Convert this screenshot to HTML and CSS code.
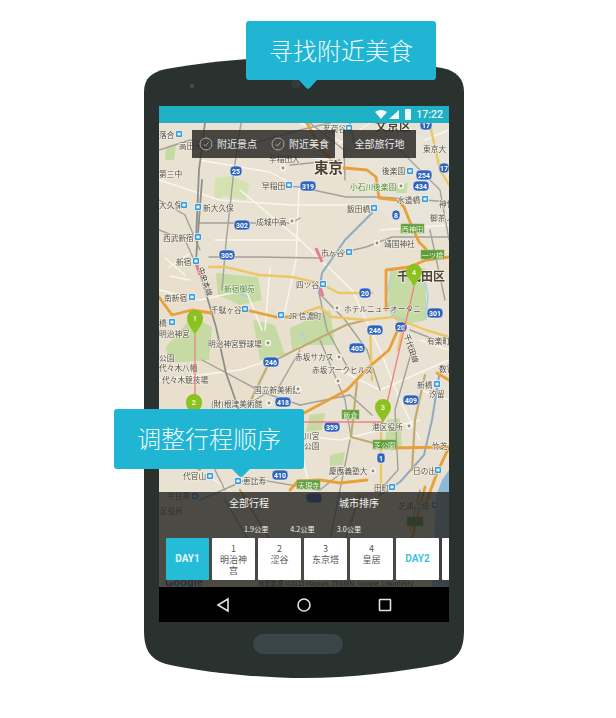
FILE: index.html
```html
<!DOCTYPE html>
<html lang="zh-CN">
<head>
<meta charset="utf-8">
<title>寻找附近美食</title>
<link rel="stylesheet" href="styles.css">
</head>
<body>
<div class="stage">
  <div class="phone">
    <svg class="shell" viewBox="144 57 320 621" aria-hidden="true">
      <path class="shell-body" d="M144 92C144 78 152 72 166 69C210 61 260 57 304 57C350 57 400 60 442 68C456 71 464 78 464 92L464 630C464 650 458 659 442 664C400 672 350 678 304 678C260 678 200 672 166 664C150 659 144 650 144 630Z"/>
      <circle class="shell-cam" cx="192" cy="86" r="2"/>
      <circle class="shell-speaker" cx="296" cy="84" r="5"/>
    </svg>
    <div class="screen">
      <div class="statusbar">
        <svg class="st-icons" viewBox="0 0 36 12" aria-hidden="true">
          <path d="M0 3Q6-1 12 3L6 10Z"/>
          <path d="M14 10L24 1V10Z"/>
          <rect x="30" y="0" width="6" height="11" rx=".8"/>
        </svg>
        <span class="clock">17:22</span>
      </div>
      <div class="maparea">
        <svg class="map" viewBox="159 123 290 464" aria-hidden="true">
          <defs>
            <g id="st"><rect x="-3.5" y="-3.5" width="7" height="7" rx="1.5" class="st-b"/><rect x="-1.6" y="-1.4" width="3.2" height="2.8" class="st-w"/></g>
            <g id="poi"><circle r="3.2" class="poi-o"/><circle r="1.4" class="poi-i"/></g>
          </defs>
          <rect class="land" x="159" y="123" width="290" height="464"/>
          <path class="land2" d="M159 250L200 270L260 300L300 330L250 400L159 420Z"/>
          <path class="land3" d="M350 130L449 130V240L400 230L360 190Z"/>
          <!-- parks -->
          <path class="park" d="M216 273L258 277L262 300L240 305L218 295Z"/>
          <path class="park" d="M192 317L212 327L209 360L169 363L166 347Z"/>
          <path class="park" d="M390 270L425 268L427 320L400 325L388 310Z"/>
          <path class="park" d="M253 320L275 325L285 355L260 360Z"/>
          <path class="park" d="M290 328L330 310L335 345L300 345L292 352Z"/>
          <path class="park" d="M387 420L400 418L402 447L385 447Z"/>
          <path class="park" d="M310 415L325 413L322 430L306 432Z"/>
          <path class="park-l" d="M215 178L232 176L249 184L246 200L225 196L214 200Z"/>
          <path class="park" d="M166 147L176 145L174 160L165 160Z"/>
          <path class="park" d="M395 185L408 183L406 193L396 193Z"/>
          <path class="park" d="M330 455L345 452L343 465L330 466Z"/>
          <path class="water" d="M449 470L442 480L436 496L432 587H449Z"/>
          <path class="moat" d="M391 275L386 300L392 315L405 320M423 272L428 295L426 318"/>
          <path class="moat" d="M306 340L300 332M232 290L248 297"/>
          <!-- white roads -->
          <g class="rw">
            <path d="M199 160L270 172L299 188L296 260L283 320"/>
            <path d="M159 180L220 200L292 205L372 205"/>
            <path d="M300 123L360 150M370 123L330 150"/>
            <path d="M159 290L200 300L246 290L262 330"/>
            <path d="M262 150L330 160M380 230L449 225"/>
            <path d="M240 190L300 240L352 290L380 350L400 400L420 440"/>
            <path d="M159 380L240 370L300 350"/>
            <path d="M330 365L380 390L449 360"/>
            <path d="M159 445L230 490M250 430L340 440L420 420"/>
            <path d="M299 440L310 490M420 340L449 350"/>
            <path d="M420 390L449 400M425 140L449 130"/>
            <path d="M168 268L192 252M170 276L190 280M165 258L185 275"/>
            <path d="M270 268L265 330M215 240L300 240"/>
          </g>
          <!-- grey roads -->
          <g class="rg">
            <path d="M241 123L234 170L226 243L222 290"/>
            <path d="M159 150L190 140L240 147L300 130L330 123"/>
            <path d="M310 123L344 150L345 180"/>
            <path d="M199 223L292 223L300 218"/>
            <path d="M262 183L299 187L346 197L379 197L425 200L449 202"/>
            <path d="M209 257L259 257L319 258L366 247L392 237L449 237"/>
            <path d="M159 230L185 240L195 262"/>
            <path d="M159 200L185 215L200 250"/>
            <path d="M319 293L345 320L367 350L380 390M319 293L327 330L349 370"/>
            <path d="M300 350L280 385L255 400"/>
            <path d="M202 360L262 392L300 405"/>
            <path d="M300 405L350 395L372 415"/>
            <path d="M412 350L395 410L398 470L380 490"/>
            <path d="M345 470L320 490L250 478L200 500"/>
            <path d="M290 165L340 160M400 150L440 190L449 240"/>
            <path d="M159 410L200 440L225 490"/>
            <path d="M320 340L345 400L351 437"/>
            <path d="M430 230L445 300"/>
            <path d="M410 330L449 345"/>
            <path d="M350 440L340 490L330 540M420 490L410 530"/>
            <path d="M225 500L260 560"/>
          </g>
          <g class="rg-d">
            <path d="M202 180L196 260L216 327L226 373L239 410"/>
            <path d="M205 123L199 170L196 240"/>
          </g>
          <g class="rail">
            <path d="M372 213L345 240L322 273L319 293"/>
            <path d="M440 370L432 420L424 455L400 482L380 495"/>
          </g>
          <g class="rt">
            <path d="M246 410L269 363L346 325L366 320"/>
            <path d="M357 383L351 437L381 445"/>
            <path d="M350 123L356 150"/>
            <path d="M425 375L415 420L412 470"/>
            <path d="M159 445L200 470"/>
            <path d="M240 490L270 540M360 495L345 540"/>
          </g>
          <g class="ry">
            <path d="M209 267L226 267L259 275L292 277L319 283L339 293L372 293"/>
            <path d="M292 317L319 307L332 317L366 320L392 317L426 330L449 337"/>
            <path d="M381 425L381 487"/>
            <path d="M370 330L372 380M402 330L398 350"/>
            <path d="M430 125L440 170L449 185"/>
          </g>
          <g class="ro">
            <path d="M344 168L367 170L376 177L379 198L397 200L404 207L412 227L419 242L426 249"/>
            <path d="M386 310L386 270L409 267L426 260L449 257"/>
            <path d="M159 297L172 315L192 310L211 313"/>
            <path d="M246 310L276 317L292 317"/>
            <path d="M304 413L347 390L369 367L389 350L399 327"/>
            <path d="M391 448L447 447"/>
            <path d="M449 447L437 473L427 500"/>
            <path d="M290 490L298 481L320 480L340 483L367 480"/>
            <path d="M437 373L449 380"/>
            <path d="M307 123L322 150L330 158"/>
            <path d="M425 487L415 525L405 580"/>
          </g>
          <path class="rr" d="M316 248L322 262M320 287L323 296M194 258L200 275"/>
          <!-- labels -->
          <g class="lb">
            <text x="159" y="138">落合</text><text x="179" y="149">高田馬場</text><text x="159" y="177">第三中</text>
            <text x="159" y="208">大久保</text><text x="203" y="211">新大久保</text><text x="163" y="241">西武新宿</text>
            <text x="262" y="189">早稲田</text><text x="256" y="225">成城中高</text><text x="323" y="132">茗荷谷</text>
            <text x="269" y="162">早稲田大</text><text x="423" y="152">東京大</text><text x="382" y="174">後楽園</text>
            <text x="397" y="203">水道橋</text><text x="439" y="207">神保</text><text x="347" y="212">飯田橋</text>
            <text x="430" y="221">御茶ノ</text><text x="384" y="247">靖国神社</text><text x="321" y="256">市ヶ谷</text>
            <text x="176" y="265">新宿</text><text x="296" y="288">四ツ谷</text><text x="164" y="301">南新宿</text>
            <text x="211" y="313">千駄ヶ谷</text><text x="288" y="319">JR 信濃町</text><text x="344" y="312">ホテルニューオータニ</text>
            <text x="159" y="326">橋</text><text x="159" y="337">明治神宮</text><text x="208" y="347">明治神宮野球場</text>
            <text x="427" y="344">有楽町</text><text x="159" y="361">公園</text><text x="159" y="371">代々木八幡</text>
            <text x="295" y="360">赤坂サカス</text><text x="312" y="373">赤坂アークヒルズ</text><text x="162" y="383">代々木競技場</text>
            <text x="439" y="372">数寄</text><text x="417" y="388">新橋</text><text x="429" y="397">汐留</text>
            <text x="254" y="393">国立新美術館</text><text x="211" y="407">(財)根津美術館</text><text x="372" y="430">港区役所</text>
            <text x="304" y="439">川宮</text><text x="304" y="449">公園</text><text x="329" y="474">慶應義塾大</text>
            <text x="432" y="449">竹芝</text><text x="413" y="474">日の出</text><text x="374" y="491">田町</text>
            <text x="183" y="479">代官山</text><text x="243" y="484">恵比寿</text><text x="167" y="499">中目黒</text>
            <text x="160" y="514">区役所</text><text x="398" y="509">芝浦ふ頭</text>
          </g>
          <text class="lb-rot" transform="translate(198 268) rotate(72)">中央本線</text>
          <text class="lb-rot" transform="translate(404 335) rotate(72)">千代田線</text>
          <g class="lb-g">
            <text x="350" y="190">小石川後楽園</text><text x="224" y="292">新宿御苑</text>
          </g>
          <text class="lb-city" x="314" y="173">東京</text>
          <text class="lb-ward" x="375" y="131">文京区</text>
          <text class="lb-ward" x="397" y="281">千代田区</text>
          <!-- green boxes -->
          <g class="gb">
            <rect x="401" y="224" width="23" height="9"/><rect x="421" y="250" width="23" height="9"/>
            <rect x="373" y="440" width="23" height="9"/><rect x="342" y="410" width="17" height="9"/>
            <rect x="297" y="480" width="23" height="9"/><rect x="407" y="517" width="16" height="9"/>
          </g>
          <g class="gbt">
            <text x="412.5" y="231.6">西神田</text><text x="432.5" y="257.6">一ツ橋</text>
            <text x="384.5" y="447.6">芝公園</text><text x="350.5" y="417.6">飯倉</text>
            <text x="308.5" y="487.6">天現寺</text>
          </g>
          <!-- stations -->
          <use href="#st" x="179" y="134"/><use href="#st" x="184" y="205"/><use href="#st" x="198" y="207"/>
          <use href="#st" x="198" y="237"/><use href="#st" x="289" y="185"/><use href="#st" x="349" y="128"/>
          <use href="#st" x="410" y="171"/><use href="#st" x="425" y="199"/><use href="#st" x="374" y="208"/>
          <use href="#st" x="349" y="252"/><use href="#st" x="196" y="261"/><use href="#st" x="323" y="284"/>
          <use href="#st" x="192" y="297"/><use href="#st" x="245" y="309"/><use href="#st" x="281" y="315"/>
          <use href="#st" x="172" y="322"/><use href="#st" x="437" y="384"/><use href="#st" x="438" y="470"/>
          <use href="#st" x="392" y="487"/><use href="#st" x="210" y="476"/><use href="#st" x="238" y="481"/>
          <use href="#st" x="195" y="496"/><use href="#st" x="435" y="505"/>
          <use href="#poi" x="283" y="168"/><use href="#poi" x="292" y="221"/><use href="#poi" x="401" y="186"/>
          <use href="#poi" x="377" y="243"/><use href="#poi" x="337" y="308"/><use href="#poi" x="268" y="343"/>
          <use href="#poi" x="339" y="357"/><use href="#poi" x="409" y="426"/><use href="#poi" x="373" y="471"/>
          <use href="#poi" x="298" y="389"/><use href="#poi" x="269" y="403"/><use href="#poi" x="338" y="381"/>
          <!-- highway shields -->
          <g class="hw">
            <rect x="230" y="166" width="12" height="10" rx="4"/><rect x="300" y="181" width="16" height="10" rx="4"/>
            <rect x="416" y="170" width="16" height="10" rx="4"/><rect x="413" y="181" width="16" height="10" rx="4"/>
            <rect x="392" y="210" width="8" height="10" rx="4"/><rect x="234" y="220" width="16" height="10" rx="4"/>
            <rect x="219" y="250" width="16" height="10" rx="4"/><rect x="359" y="288" width="12" height="10" rx="4"/>
            <rect x="395" y="322" width="12" height="10" rx="4"/><rect x="367" y="325" width="16" height="10" rx="4"/>
            <rect x="427" y="308" width="16" height="10" rx="4"/><rect x="349" y="343" width="16" height="10" rx="4"/>
            <rect x="263" y="357" width="16" height="10" rx="4"/><rect x="275" y="397" width="16" height="10" rx="4"/>
            <rect x="403" y="395" width="16" height="10" rx="4"/><rect x="324" y="422" width="16" height="10" rx="4"/>
            <rect x="377" y="453" width="8" height="10" rx="3"/><rect x="272" y="470" width="16" height="10" rx="4"/>
            <rect x="420" y="120" width="12" height="10" rx="4"/><rect x="439" y="163" width="10" height="10" rx="4"/>
            <rect x="306" y="493" width="16" height="10" rx="4"/>
          </g>
          <g class="hwt">
            <text x="236" y="173.5">25</text><text x="308" y="188.5">319</text><text x="424" y="177.5">254</text>
            <text x="421" y="188.5">434</text><text x="396" y="217.5">8</text><text x="242" y="227.5">302</text>
            <text x="227" y="257.5">305</text><text x="365" y="295.5">20</text><text x="401" y="329.5">20</text>
            <text x="375" y="332.5">246</text><text x="435" y="315.5">301</text><text x="357" y="350.5">405</text>
            <text x="271" y="364.5">246</text><text x="283" y="404.5">418</text><text x="411" y="402.5">409</text>
            <text x="332" y="429.5">359</text><text x="381" y="460.5">1</text><text x="280" y="477.5">410</text>
            <text x="426" y="127.5">17</text><text x="444" y="170.5">17</text>
          </g>
          <text class="attr" x="258" y="586">地图数据 ©2015 Mapion, ZENRIN, Google, Lnkinfinity</text>
          <text class="attr-g" x="165" y="586">Google</text>
          <!-- route -->
          <path class="route" d="M195 335V402M195 422H383M414 287L387 403"/>
          <!-- pins -->
          <path class="pin" d="M195 335C192 328 187 325 187 318A8 8 0 1 1 203 318C203 325 198 328 195 335Z"/>
          <path class="pin" d="M194 419C191 412 186 409 186 402A8 8 0 1 1 202 402C202 409 197 412 194 419Z"/>
          <path class="pin" d="M383 423C380 416 375 413 375 407A8 8 0 1 1 391 407C391 413 386 416 383 423Z"/>
          <path class="pin" d="M414 287C411 280 406 277 406 272A8 8 0 1 1 422 272C422 277 417 280 414 287Z"/>
          <g class="pint">
            <text x="195" y="321">1</text><text x="194" y="405">2</text><text x="383" y="410">3</text><text x="414" y="275">4</text>
          </g>
        </svg>
        <div class="filters">
          <div class="filter-box filter-main">
            <span class="filter-item">
              <svg class="tick" viewBox="0 0 14 14" aria-hidden="true"><circle cx="7" cy="7" r="6"/><path d="M4.5 7.2L6.4 9L9.6 5.2"/></svg>附近景点
            </span>
            <span class="filter-item">
              <svg class="tick" viewBox="0 0 14 14" aria-hidden="true"><circle cx="7" cy="7" r="6"/><path d="M4.5 7.2L6.4 9L9.6 5.2"/></svg>附近美食
            </span>
          </div>
          <div class="filter-box filter-all">全部旅行地</div>
        </div>
        <div class="panel">
          <div class="tabs"><span>全部行程</span><span>城市排序</span></div>
          <div class="dists"><span>1.9公里</span><span>4.2公里</span><span>3.0公里</span></div>
          <div class="cards">
            <div class="card card-day-on">DAY1</div>
            <div class="card"><span>1</span><span>明治神宫</span></div>
            <div class="card"><span>2</span><span>涩谷</span></div>
            <div class="card"><span>3</span><span>东京塔</span></div>
            <div class="card"><span>4</span><span>皇居</span></div>
            <div class="card card-day">DAY2</div>
            <div class="card"></div>
          </div>
        </div>
      </div>
      <div class="navbar">
        <svg class="nav-ic" viewBox="0 0 16 16" aria-hidden="true"><path d="M13 2V14L3 8Z"/></svg>
        <svg class="nav-ic" viewBox="0 0 16 16" aria-hidden="true"><circle cx="8" cy="8" r="6"/></svg>
        <svg class="nav-ic" viewBox="0 0 16 16" aria-hidden="true"><rect x="2.5" y="2.5" width="11" height="11" rx=".6"/></svg>
      </div>
    </div>
    <div class="homebtn"></div>
  </div>
  <div class="callout callout-top">寻找附近美食</div>
  <div class="callout callout-left">调整行程顺序</div>
</div>
</body>
</html>
```
FILE: styles.css
```css
* { box-sizing: border-box; }
html, body { margin: 0; padding: 0; background: #fff; }
body { font-family: "Noto Sans CJK SC", "Noto Sans", sans-serif; }
.stage { position: relative; width: 616px; height: 718px; padding: 57px 0 0 144px; overflow: hidden; }
.phone { position: relative; width: 320px; height: 621px; padding: 49px 15px 0; }
.shell { position: absolute; left: 0; top: 0; width: 320px; height: 621px; }
.shell-body { fill: #2a3230; }
.shell-cam { fill: #4a5252; }
.shell-speaker { fill: #333b3a; }
.screen { position: relative; width: 290px; height: 516px; display: flex; flex-direction: column; overflow: hidden; }
.statusbar { height: 17px; flex: none; background: #1fb0c6; display: flex; align-items: center; justify-content: flex-end; padding-right: 6px; gap: 5px; }
.st-icons { width: 36px; height: 12px; fill: #f2fbfc; }
.clock { font: 500 10.5px/17px Roboto, sans-serif; color: #e6f7fa; }
.maparea { position: relative; flex: 1; display: flex; flex-direction: column; overflow: hidden; }
.map { position: absolute; left: 0; top: 0; width: 290px; height: 464px; filter: blur(.5px); }
.land { fill: #e9e2d2; }
.land2 { fill: #e8e0cd; }
.land3 { fill: #e8e4d8; }
.park { fill: #c5dba3; }
.park-l { fill: #d4e1b0; }
.water { fill: #8fb8d8; }
.moat { fill: none; stroke: #a9cfe6; stroke-width: 1.5; }
.rw path, .rg path, .rg-d path, .rail path, .rt path, .ry path, .ro path { fill: none; stroke-linejoin: round; stroke-linecap: round; }
.rw path { stroke: #f8f6f0; stroke-width: 1.4; }
.rg path { stroke: #a3a198; stroke-width: 1.4; }
.rg-d path { stroke: #8f8f8a; stroke-width: 1.8; }
.rail path { stroke: #8faac4; stroke-width: 2; }
.rt path { stroke: #c0ab70; stroke-width: 2.2; }
.ry path { stroke: #ecc767; stroke-width: 2.4; }
.ro path { stroke: #e9a038; stroke-width: 2.8; }
.rr { fill: none; stroke: #e77f8a; stroke-width: 3; }
.lb text, .lb-rot { font: 400 7.7px "Noto Sans CJK JP", sans-serif; fill: #56524a; stroke: #f3efe4; stroke-width: 1.2px; paint-order: stroke; }
.lb-rot { font-size: 7.5px; fill: #3f3c36; }
.lb-g text { font: 400 7.7px "Noto Sans CJK JP", sans-serif; fill: #4f8a3c; stroke: #eef0dc; stroke-width: 1.2px; paint-order: stroke; }
.lb-city { font: 700 14.5px "Noto Sans CJK JP", sans-serif; fill: #4b3f2e; stroke: #f3efe4; stroke-width: 2px; paint-order: stroke; }
.lb-ward { font: 700 12px "Noto Sans CJK JP", sans-serif; fill: #4b4638; stroke: #f3efe4; stroke-width: 1.6px; paint-order: stroke; }
.gb rect { fill: #5f9c3c; stroke: #8cbb62; stroke-width: .6; }
.gbt text { font: 400 7.2px "Noto Sans CJK JP", sans-serif; fill: #f0f6e2; text-anchor: middle; }
.st-b { fill: #3a9ad9; stroke: #fff; stroke-width: .7; }
.st-w { fill: #e6f3fb; }
.poi-o { fill: #f5f2ea; }
.poi-i { fill: #908c80; }
.hw rect { fill: #2f64bd; stroke: #eef2f8; stroke-width: .6; }
.hwt text { font: 700 7px Roboto, sans-serif; fill: #fff; text-anchor: middle; }
.attr { font: 400 6.4px "Noto Sans CJK JP", sans-serif; fill: #2d2d2d; }
.attr-g { font: 700 11px "Liberation Sans", sans-serif; fill: #1f5fa8; }
.route { fill: none; stroke: #ee7f85; stroke-width: 1.3; }
.pin { fill: #8cc21f; }
.pint text { font: 700 7.5px Roboto, sans-serif; fill: #e9f5c8; text-anchor: middle; }
.filters { position: relative; display: flex; gap: 8px; margin: 7px 0 0 33px; height: 28px; flex: none; }
.filter-box { background: rgba(44, 44, 42, .86); color: #ececec; font-size: 10px; line-height: 28px; height: 28px; white-space: nowrap; }
.filter-main { width: 143px; display: flex; padding-left: 7px; gap: 14px; }
.filter-all { width: 73px; text-align: center; }
.filter-item { display: flex; align-items: center; gap: 4px; }
.tick { width: 14px; height: 14px; fill: none; stroke: #a9a9a4; stroke-width: 1; }
.panel { position: relative; margin-top: auto; height: 95px; flex: none; background: rgba(36, 36, 34, .8); color: #f2f2f2; }
.tabs { display: flex; height: 21px; padding: 0 0 0 70px; gap: 70px; font-size: 10px; line-height: 21px; }
.dists { display: flex; height: 25px; padding: 11px 0 0 85px; gap: 22px; font-size: 7.2px; line-height: 10px; }
.cards { display: flex; gap: 3px; padding-left: 7px; }
.card { flex: none; width: 43px; height: 42px; background: #fff; color: #555; border-radius: 1px; display: flex; flex-direction: column; align-items: center; justify-content: flex-start; padding: 5px 7px 0; font-size: 9px; line-height: 11px; text-align: center; }
.card-day-on, .card-day { font: 700 10px/32px Roboto, sans-serif; padding: 5px 0 0; }
.card-day-on { background: #24bcd6; color: #e6f8fb; }
.card-day { color: #3ec4dd; }
.navbar { height: 35px; flex: none; background: #000; display: flex; align-items: center; padding-left: 56px; gap: 65px; }
.nav-ic { width: 16px; height: 16px; fill: none; stroke: #e2e2e2; stroke-width: 1.6; }
.homebtn { position: relative; width: 90px; height: 20px; margin: 12px auto 0; background: #394547; border-radius: 10px; transform: translateX(-6px); }
.callout { position: absolute; background: #1fb5d3; color: #eefafd; width: 190px; border-radius: 3px; font-size: 24px; font-weight: 300; text-align: center; white-space: nowrap; }
.callout::after { content: ""; position: absolute; top: 100%; width: 18px; height: 9px; background: #1fb5d3; clip-path: polygon(0 0, 100% 0, 60% 90%, 50% 100%, 40% 90%); }
.callout-top { left: 246px; top: 21px; height: 59px; line-height: 57px; }
.callout-top::after { left: 53px; }
.callout-left { left: 114px; top: 409px; height: 60px; line-height: 57px; }
.callout-left::after { left: 118px; height: 8px; }
```
